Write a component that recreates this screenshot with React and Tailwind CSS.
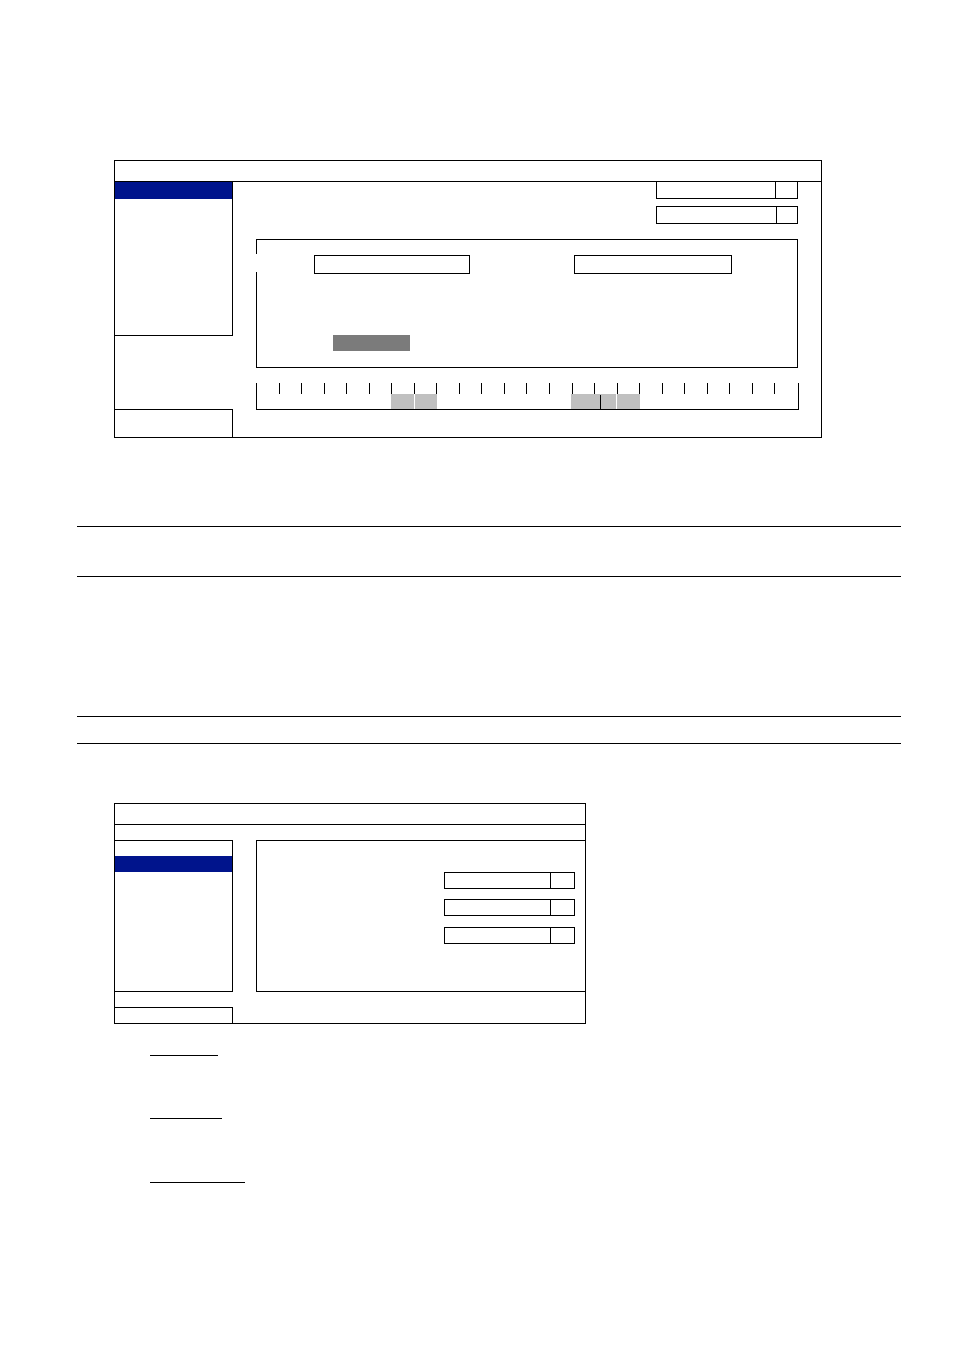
import React from "react";

function Drop({ main, arrow, noTop, short }) {
  const outer = noTop
    ? "flex h-[17px] border-b border-black"
    : short
    ? "flex h-[17px] border-y border-black"
    : "flex h-[18px] border-y border-black";
  return (
    <div className={outer}>
      <div className={main + " h-full border-l border-black"} />
      <div className={arrow + " h-full border-x border-black"} />
    </div>
  );
}

export default function App() {
  const hours = Array.from({ length: 24 }, (_, i) => i);
  return (
    <div className="w-[954px] h-[1350px] bg-white overflow-hidden font-['Liberation_Sans',sans-serif]">
      <div className="pt-[160px] flex flex-col">
        {/* Figure 1 */}
        <div className="ml-[114px] w-[708px] h-[278px] border border-black flex flex-col">
          <div className="h-[21px] border-b border-black shrink-0" />
          <div className="flex flex-1">
            <div className="w-[118px] shrink-0 flex flex-col">
              <div className="h-[154px] border-r border-b border-black">
                <div className="h-[17px] bg-[#00148c]" />
              </div>
              <div className="flex-1" />
              <div className="h-[28px] border-t border-r border-black" />
            </div>
            <div className="flex-1 flex flex-col">
              <div className="flex justify-end pr-[23px]">
                <Drop noTop main="w-[119px]" arrow="w-[23px]" />
              </div>
              <div className="mt-[7px] flex justify-end pr-[23px]">
                <Drop main="w-[120px]" arrow="w-[22px]" />
              </div>
              <div className="mt-[15px] ml-[23px] w-[542px] h-[129px] border-t border-r border-b border-black flex">
                <div className="w-px flex flex-col">
                  <div className="h-[14px] bg-black" />
                  <div className="h-[18px]" />
                  <div className="flex-1 bg-black" />
                </div>
                <div className="flex-1 pt-[15px] flex flex-col">
                  <div className="flex pl-[57px]">
                    <div className="w-[156px] h-[19px] border border-black" />
                    <div className="ml-[104px] w-[158px] h-[19px] border border-black" />
                  </div>
                  <div className="mt-[61px] ml-[76px] w-[77px] h-[16px] bg-[#7b7b7b]" />
                </div>
              </div>
              <div className="mt-[15px] ml-[23px] w-[543px] h-[27px] border-l border-r border-b border-black flex flex-col">
                <div className="h-[11px] grid grid-cols-[repeat(24,minmax(0,1fr))]">
                  {hours.map((h) => (
                    <div key={h} className={h < 23 ? "h-full border-r border-black" : "h-full"} />
                  ))}
                </div>
                <div className="relative h-[15px] grid grid-cols-[repeat(24,minmax(0,1fr))]">
                  <div className="col-start-7 col-span-1 bg-[#c0c0c0] -ml-px mr-px" />
                  <div className="col-start-8 col-span-1 bg-[#c0c0c0]" />
                  <div className="col-start-15 col-span-2 bg-[#c0c0c0] -ml-[2px] mr-[2px]" />
                  <div className="col-start-17 col-span-1 bg-[#c0c0c0] -ml-px" />
                  <div className="absolute left-[343px] top-px bottom-0 w-px bg-black" />
                </div>
              </div>
            </div>
          </div>
        </div>

        {/* Section rules */}
        <div className="mt-[88px] ml-[77px] w-[824px] h-px bg-black" />
        <div className="mt-[49px] ml-[77px] w-[824px] h-px bg-black" />
        <div className="mt-[139px] ml-[77px] w-[824px] h-px bg-black" />
        <div className="mt-[26px] ml-[77px] w-[824px] h-px bg-black" />

        {/* Figure 3 */}
        <div className="mt-[59px] ml-[114px] w-[472px] h-[221px] border border-black flex flex-col">
          <div className="h-[21px] border-b border-black shrink-0" />
          <div className="h-[15px] shrink-0" />
          <div className="flex h-[152px] shrink-0">
            <div className="w-[118px] shrink-0 border-t border-r border-b border-black pt-[15px]">
              <div className="h-[16px] bg-[#00148c]" />
            </div>
            <div className="w-[23px] shrink-0" />
            <div className="flex-1 border-t border-l border-b border-black pt-[31px] pr-[10px] flex flex-col items-end">
              <Drop short main="w-[106px]" arrow="w-[25px]" />
              <div className="mt-[10px]">
                <Drop short main="w-[106px]" arrow="w-[25px]" />
              </div>
              <div className="mt-[11px]">
                <Drop short main="w-[106px]" arrow="w-[25px]" />
              </div>
            </div>
          </div>
          <div className="h-[15px] shrink-0" />
          <div className="w-[118px] h-[16px] border-t border-r border-black" />
        </div>

        {/* Underlined headings */}
        <div className="mt-[31px] ml-[150px] w-[68px] h-px bg-black" />
        <div className="mt-[62px] ml-[150px] w-[72px] h-px bg-black" />
        <div className="mt-[63px] ml-[150px] w-[95px] h-px bg-black" />
      </div>
    </div>
  );
}
